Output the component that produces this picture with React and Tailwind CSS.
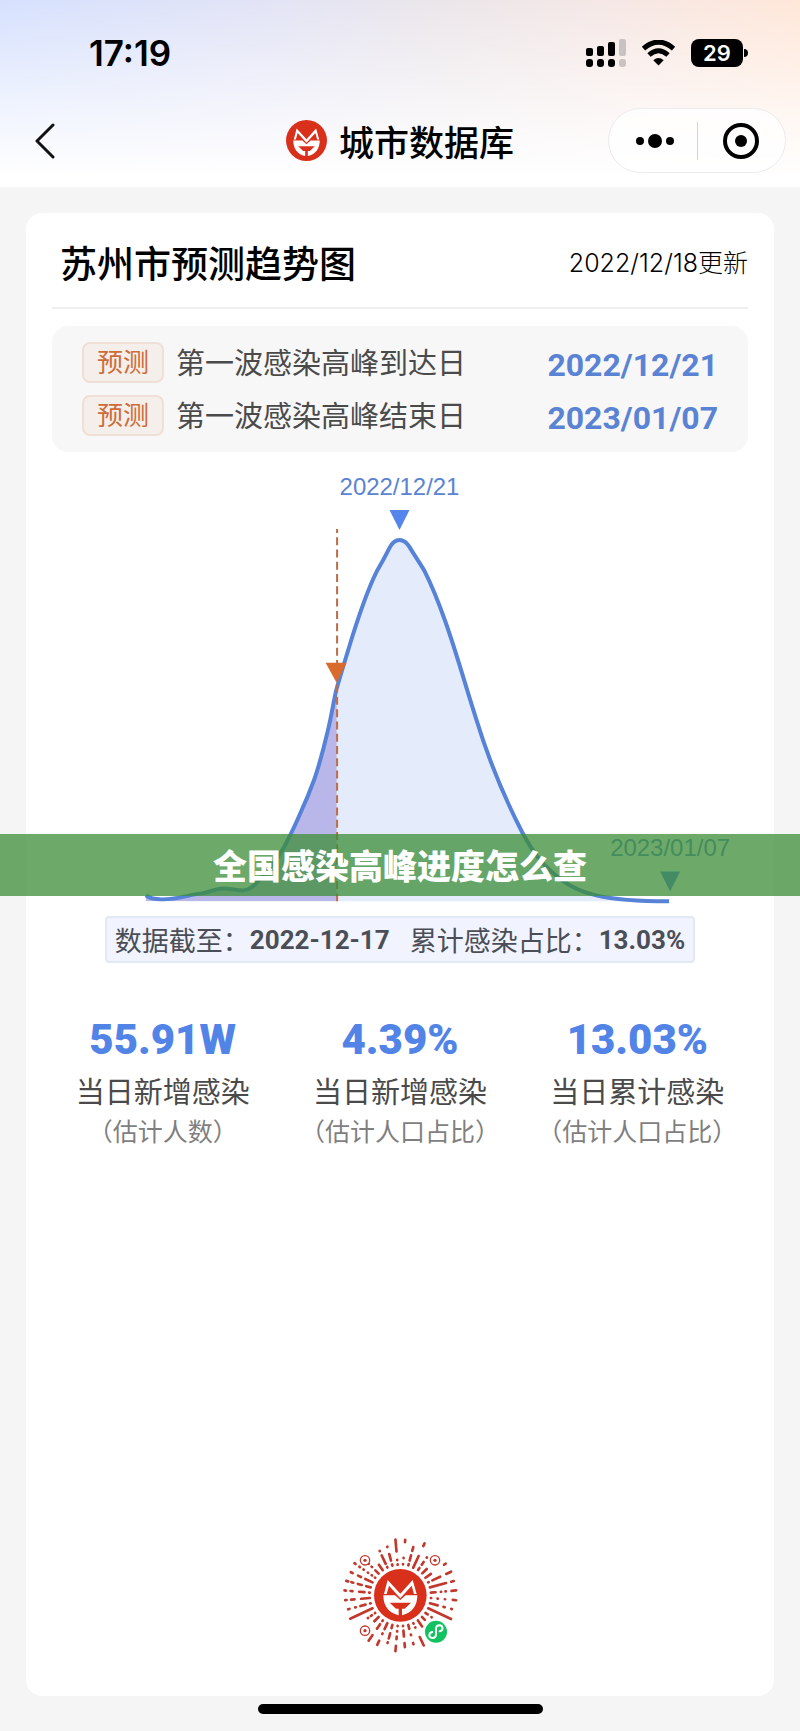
import React from "react";

const forecasts = [
  { label: "第一波感染高峰到达日", date: "2022/12/21" },
  { label: "第一波感染高峰结束日", date: "2023/01/07" },
];

const stats = [
  { value: "55.91W", label: "当日新增感染", note: "（估计人数）" },
  { value: "4.39%", label: "当日新增感染", note: "（估计人口占比）" },
  { value: "13.03%", label: "当日累计感染", note: "（估计人口占比）" },
];

// One entry per ray, clockwise from 5deg: [start radius, end radius] pairs
const rays = [
  [[93, 94], [112, 113], [160, 167]],
  [[93, 97], [108, 124], [138, 150]],
  [[91, 130], [163, 172]],
  [[93, 100], [112, 122], [138, 139]],
  [[93, 112]],
  [[92, 112], [160, 166]],
  [[92, 94], [106, 132], [152, 168]],
  [[92, 142], [158, 166]],
  [[92, 106], [122, 123], [136, 137], [154, 168]],
  [[92, 93], [112, 113], [134, 135], [158, 168]],
  [[92, 116], [134, 138], [158, 160]],
  [[92, 168]],
  [[92, 100], [114, 115]],
  [[92, 104]],
  [[92, 114]],
  [[92, 94], [106, 107], [138, 166]],
  [[92, 104], [122, 124], [148, 152]],
  [[92, 93], [106, 124], [144, 156]],
  [[92, 93], [108, 109], [124, 132], [152, 168]],
  [[92, 102], [118, 134], [146, 148]],
  [[92, 112], [126, 128], [150, 164]],
  [[92, 94], [106, 122], [146, 166]],
  [[92, 110]],
  [[92, 93], [104, 108], [118, 119]],
  [[92, 166]],
  [[92, 94], [108, 124], [138, 140], [158, 162]],
  [[92, 118], [138, 148], [162, 166]],
  [[92, 94], [108, 124], [144, 150], [164, 168]],
  [[92, 106], [120, 132], [146, 152], [162, 168]],
  [[92, 116], [130, 140], [158, 164]],
  [[92, 93], [104, 105], [118, 119], [134, 135], [148, 150], [164, 168]],
  [[92, 106], [120, 122], [134, 135]],
  [[92, 112]],
  [[92, 94], [104, 132], [146, 147]],
  [[92, 96], [108, 128], [150, 151]],
  [[92, 93], [106, 107], [132, 168]],
];

const curve =
  "M94 426 C98 429 102 430 110 430 C128 430 138 425 150 424 C162 422 164 419 171 419 C180 419 184 421 192 421 C200 420 203 415 208 410 C220 398 226 388 231 380 C236 371 240 364 249 343 C256 328 259 320 263 309 C268 294 272 279 276 262 C280 246 282 231 285 219 C290 202 296 182 301 166 C308 144 316 120 325 102 C332 90 335 84 338 78 C341 72 344 70 348 70 C352 70 355 72 358 77 C362 84 367 91 373 101 C380 115 387 132 394 152 C406 186 414 216 425 250 C440 299 455 332 471 363 C483 385 490 393 501 403 C516 416 528 422 545 426 C562 430 590 432 618 432";

const LogoFace = () => (
  <g>
    <circle cx="211" cy="211" r="79" fill="#d9301c" />
    <path d="M162 207L173 165L211 206L248 165L260 207H252L245 182L211 220L177 182L170 207Z" fill="#fff" />
    <path d="M160 211H195L211 225L227 211H262C262 240 248 264 216 271V251H224L243 233H179L198 251H206V271C174 264 160 240 160 211Z" fill="#fff" />
  </g>
);

const StatusIcons = () => (
  <div className="flex items-center gap-[15px]">
    <svg className="w-10 h-7" viewBox="0 0 40 28" aria-label="信号">
      <rect x="0" y="9" width="7" height="8" rx="2" />
      <rect x="11" y="7" width="7" height="10" rx="2" />
      <rect x="22" y="3" width="7" height="14" rx="2" />
      <rect x="33" y="0" width="7" height="17" rx="2" fill="#c9c2c3" />
      <rect x="0" y="20" width="7" height="8" rx="3" />
      <rect x="11" y="20" width="7" height="8" rx="3" />
      <rect x="22" y="20" width="7" height="8" rx="3" />
      <rect x="33" y="20" width="7" height="8" rx="3" fill="#c9c2c3" />
    </svg>
    <svg className="w-[35px] h-[26px]" viewBox="0 0 35 26" aria-label="无线网络">
      <path d="M2.5 8.6Q17.5 -4.4 32.5 8.6" fill="none" stroke="#000" strokeWidth="5" />
      <path d="M8 15Q17.500 6.500 27 15" fill="none" stroke="#000" strokeWidth="5" />
      <path d="M12.300 20.200Q17.500 15.800 22.700 20.200L17.500 25.500Z" />
    </svg>
    <div className="flex items-center gap-px">
      <div className="w-[52px] h-7 rounded-lg bg-black text-white font-['Inter'] font-semibold text-[22px] leading-7 text-center">29</div>
      <div className="w-1 h-2 rounded-r-full bg-black" />
    </div>
  </div>
);

const Header = () => (
  <header className="bg-[linear-gradient(to_bottom,rgba(255,255,255,0)_0%,rgba(255,255,255,0.65)_60%,#fff_95%),linear-gradient(to_right,#d6e1fe_0%,#e3e4f5_35%,#ebe6ea_55%,#f5e8e6_75%,#ffe7d9_100%)]">
    <div className="h-[106px] pl-[89px] pr-[52px] flex items-center justify-between">
      <time className="font-['Inter'] font-semibold text-[35px]">17:19</time>
      <StatusIcons />
    </div>
    <nav className="pt-[2px] pb-[14px] px-[14px] grid grid-cols-[1fr_auto_1fr] items-center">
      <button aria-label="返回" className="w-11 h-10 flex items-center justify-end">
        <svg className="w-6 h-9" viewBox="0 0 24 36" fill="none" stroke="#111" strokeWidth="3" strokeLinecap="round" strokeLinejoin="round">
          <path d="M19 2L3 18L19 34" />
        </svg>
      </button>
      <div className="flex items-center gap-3">
        <svg className="w-[41px] h-[41px]" viewBox="132 132 158 158" aria-hidden="true">
          <LogoFace />
        </svg>
        <h1 className="text-[35px] leading-[50px] font-medium">城市数据库</h1>
      </div>
      <div className="justify-self-end w-[178px] h-[65px] rounded-full border border-[#ececec] bg-white/80 flex items-center">
        <button aria-label="更多" className="flex-1 h-full flex items-center justify-center">
          <svg className="w-10 h-4 ml-1" viewBox="0 0 40 16">
            <circle cx="5" cy="8" r="4" />
            <circle cx="20" cy="8" r="7" />
            <circle cx="35" cy="8" r="4" />
          </svg>
        </button>
        <div className="w-px h-[38px] bg-[#d4d4d4]" />
        <button aria-label="关闭" className="flex-1 h-full flex items-center justify-center">
          <svg className="w-9 h-9" viewBox="0 0 36 36">
            <circle cx="18" cy="18" r="16" fill="none" stroke="#000" strokeWidth="4" />
            <circle cx="18" cy="18" r="6" />
          </svg>
        </button>
      </div>
    </nav>
  </header>
);

const TrendChart = () => (
  <div className="relative mt-[18px]">
    <svg className="w-full block" viewBox="0 0 697 440" aria-label="感染趋势">
      <path d={`${curve} L618 432 L94 432Z`} fill="#e4ebfb" />
      <clipPath id="past">
        <rect x="90" y="60" width="195" height="372" />
      </clipPath>
      <path d={`${curve} L618 432 L94 432Z`} fill="#b9b7ea" clipPath="url(#past)" />
      <path d={curve} fill="none" stroke="#5682d8" strokeWidth="4" />
      <path d="M285.500 59V432" stroke="#bd6c45" strokeWidth="2" strokeDasharray="8 4.300" strokeDashoffset="4" />
      <path d="M274 193H295L285 213Z" fill="#d86a2c" />
      <path d="M338 40H358L348 60Z" fill="#5385ec" />
      <path d="M609 402H629L619 422Z" fill="#5385ec" />
      <g className="font-['Liberation_Sans'] text-[24px]" fill="#5b83d0" textAnchor="middle">
        <text x="348" y="25">2022/12/21</text>
        <text x="619" y="387">2023/01/07</text>
      </g>
    </svg>
    <div className="absolute -inset-x-[52px] top-[364px] h-[62px] bg-[rgb(60,141,55)]/75 flex items-center justify-center">
      <p className="text-white font-black text-[34px] leading-[50px]">全国感染高峰进度怎么查</p>
    </div>
  </div>
);

const MiniCode = () => (
  <svg className="w-[140px] h-[140px]" viewBox="0 0 420 420" aria-label="小程序码">
    <g stroke="#c2382c" strokeWidth="8" strokeLinecap="round">
      {rays.map((segments, i) => (
        <g key={i} transform={`rotate(${5 + i * 10} 211 211)`}>
          {segments.map(([from, to]) => (
            <path key={from} d={`M211 ${211 - from}V${211 - to}`} />
          ))}
        </g>
      ))}
    </g>
    {[[105, 106], [315, 106], [105, 317]].map(([x, y]) => (
      <g key={`${x}-${y}`}>
        <circle cx={x} cy={y} r="14" fill="#fff" stroke="#c2382c" strokeWidth="4" />
        <circle cx={x} cy={y} r="5" fill="#c2382c" />
      </g>
    ))}
    <LogoFace />
    <circle cx="318" cy="320" r="37" fill="#fff" />
    <circle cx="318" cy="320" r="33" fill="#12c160" />
    <path d="M307 321C296 323 294 338 307 339C315 339 318 334 318 328V312C318 305 322 301 328 301C341 302 340 317 329 319" fill="none" stroke="#fff" strokeWidth="6" strokeLinecap="round" />
  </svg>
);

const App = () => {
  return (
    <div className="min-h-screen flex flex-col bg-[#f5f5f5] text-black font-['Noto_Sans_CJK_SC',sans-serif]">
      <Header />

      <main className="flex-1 flex flex-col mt-[26px] mx-[26px] px-[26px] pb-[31px] bg-white rounded-2xl">
        {/* Title */}
        <div className="h-24 pt-1 pl-2 border-b-2 border-[#efefef] flex items-center justify-between">
          <h2 className="text-[37px] leading-[50px] font-medium">苏州市预测趋势图</h2>
          <span className="pt-1 text-[25px] font-['Inter','Noto_Sans_CJK_SC',sans-serif] font-light">2022/12/18更新</span>
        </div>

        {/* Forecast dates */}
        <div className="mt-[17px] py-4 pl-[30px] pr-[30px] bg-[#f7f7f7] rounded-2xl flex flex-col gap-3">
          {forecasts.map((f) => (
            <div key={f.date} className="h-[41px] flex items-center">
              <span className="w-[82px] h-[41px] mr-3 rounded-lg border-2 border-[#f0dfd7] bg-[#f5efec] text-[#cd6c38] text-[26px] leading-[34px] text-center">预测</span>
              <span className="pb-1 text-[29px] leading-[38px] text-[#4a4a4a]">{f.label}</span>
              <span className="pt-1 ml-auto font-['Roboto'] font-bold text-[32px] leading-[38px] text-[#5b83d4]">{f.date}</span>
            </div>
          ))}
        </div>

        <TrendChart />

        {/* Summary */}
        <div className="mt-[7px] self-center h-[47px] px-2 flex items-center rounded border-2 border-[#e3e8f5] bg-[#f1f4fe] text-[27px] leading-[42px] text-[#4b4e57]">
          <span>数据截至：</span>
          <b className="font-['Roboto'] text-[26px] mr-5">2022-12-17</b>
          <span>累计感染占比：</span>
          <b className="font-['Roboto'] text-[26px]">13.03%</b>
        </div>

        {/* Daily numbers */}
        <div className="mt-[57px] -mx-2 grid grid-cols-3 text-center">
          {stats.map((s, i) => (
            <div key={i}>
              <div className="font-['Roboto'] font-black text-[42px] leading-10 text-[#5284e8]">{s.value}</div>
              <div className="mt-[10px] text-[29px] leading-10 text-[#4a4a4a]">{s.label}</div>
              <div className="text-[25px] leading-10 text-[#7f7f7f]">{s.note}</div>
            </div>
          ))}
        </div>

        <div className="mt-auto pt-24 flex justify-center">
          <MiniCode />
        </div>
      </main>

      <footer className="h-[35px] pt-2 flex justify-center">
        <div className="w-[285px] h-[10px] rounded-full bg-black" />
      </footer>
    </div>
  );
};

export default App;
